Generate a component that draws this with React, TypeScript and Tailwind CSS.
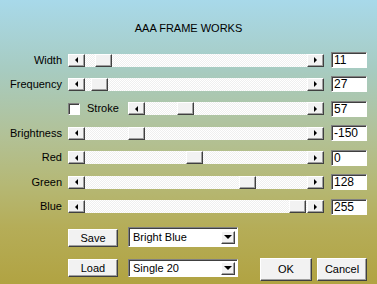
const rows = [
  { label: 'Width', value: '11', thumb: 'ml-[10px]', h: 'h-[24px]' },
  { label: 'Frequency', value: '27', thumb: 'ml-[6px]', h: 'h-[24px]' },
  { label: 'Stroke', value: '57', thumb: 'ml-[32px]', h: 'h-[25px]', check: true },
  { label: 'Brightness', value: '-150', thumb: 'ml-[43px]', h: 'h-[24px]' },
  { label: 'Red', value: '0', thumb: 'ml-[101px]', h: 'h-[25px]' },
  { label: 'Green', value: '128', thumb: 'ml-[154px]', h: 'h-[24px]' },
  { label: 'Blue', value: '255', thumb: 'ml-[204px]', h: 'h-[25px]' },
];

const raised =
  'bg-[#f2f2f2] border border-t-white border-l-white border-r-[#404040] border-b-[#404040] shadow-[inset_-1px_-1px_#a0a0a0]';
const sunken =
  'bg-white border border-t-[#808080] border-l-[#808080] border-r-white border-b-white shadow-[inset_1px_1px_#404040]';

function Arrow({ dir }: { dir: 'left' | 'right' }) {
  return (
    <div className={`w-[17px] h-full flex items-center justify-center ${raised}`}>
      {dir === 'left' ? (
        <div className="w-0 h-0 border-y-[3px] border-y-transparent border-r-[3px] border-r-black" />
      ) : (
        <div className="w-0 h-0 border-y-[3px] border-y-transparent border-l-[3px] border-l-black" />
      )}
    </div>
  );
}

function ScrollBar({ width, thumb }: { width: string; thumb: string }) {
  return (
    <div className={`flex h-[13px] ${width}`}>
      <Arrow dir="left" />
      <div className="flex-1 flex bg-[repeating-conic-gradient(#ffffff_0_25%,#efefef_0_50%)] bg-[length:2px_2px]">
        <div className={`h-full w-[17px] ${thumb} ${raised}`} />
      </div>
      <Arrow dir="right" />
    </div>
  );
}

function Combo({ text, h }: { text: string; h: string }) {
  return (
    <div className={`w-[110px] ${h} flex items-center pl-[4px] pr-[2px] ${sunken}`}>
      <span className="flex-1 leading-none">{text}</span>
      <div className={`w-[14px] h-[13px] flex items-center justify-center ${raised}`}>
        <div className="w-0 h-0 border-x-[4px] border-x-transparent border-t-[4px] border-t-black" />
      </div>
    </div>
  );
}

export default function App() {
  return (
    <div className="w-[377px] h-[284px] overflow-hidden font-['Liberation_Sans',Arial,sans-serif] text-[11px] text-black bg-[linear-gradient(to_bottom,#a8d9ea_0%,#a7cbc0_25%,#b2c196_48%,#b5b875_65%,#b5ad58_80%,#b1a342_100%)]">
      <div className="pt-[21px] h-[35px] leading-[14px] text-center">AAA FRAME WORKS</div>
      <div className="mt-[13px] flex flex-col">
        {rows.map((r) => (
          <div key={r.label} className={`flex items-center ${r.h}`}>
            {r.check ? (
              <>
                <div className={`ml-[68px] w-[12px] h-[12px] ${sunken}`} />
                <span className="ml-[7px] w-[41px]">{r.label}</span>
                <ScrollBar width="w-[196px]" thumb={r.thumb} />
              </>
            ) : (
              <>
                <span className="w-[62px] text-right">{r.label}</span>
                <div className="ml-[6px]">
                  <ScrollBar width="w-[256px]" thumb={r.thumb} />
                </div>
              </>
            )}
            <div className={`ml-[7px] w-[36px] h-[16px] flex items-center pl-[2px] text-[12px] ${sunken}`}>
              {r.value}
            </div>
          </div>
        ))}
      </div>
      <div className="mt-[8px] pl-[68px] flex items-end h-[20px]">
        <button className={`w-[50px] h-[18px] ${raised}`}>Save</button>
        <div className="ml-[10px]">
          <Combo text="Bright Blue" h="h-[20px]" />
        </div>
      </div>
      <div className="mt-[11px] pl-[68px] flex items-start">
        <button className={`mt-[1px] w-[50px] h-[18px] ${raised}`}>Load</button>
        <div className="ml-[10px] mt-[1px]">
          <Combo text="Single 20" h="h-[18px]" />
        </div>
        <button className={`ml-[22px] w-[52px] h-[23px] ${raised}`}>OK</button>
        <button className={`ml-[5px] w-[50px] h-[23px] ${raised}`}>Cancel</button>
      </div>
    </div>
  );
}
